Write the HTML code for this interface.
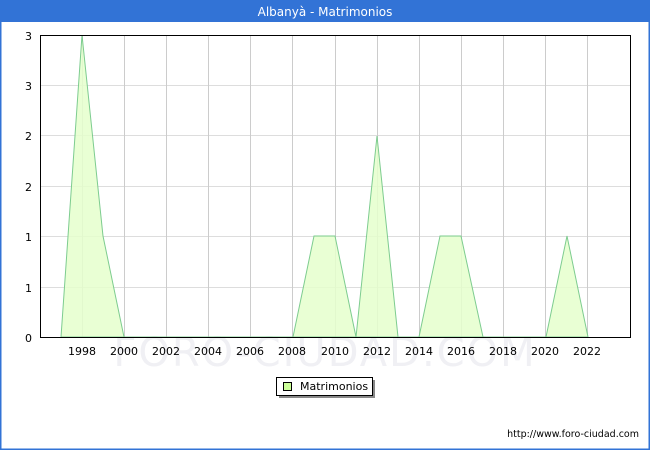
<!DOCTYPE html>
<html><head><meta charset="utf-8"><style>
body{margin:0;width:650px;height:450px;overflow:hidden;font-family:"DejaVu Sans","Liberation Sans",sans-serif;}
</style></head><body>
<svg width="650" height="450" xmlns="http://www.w3.org/2000/svg" font-family="DejaVu Sans, Liberation Sans, sans-serif">
<rect x="0" y="0" width="650" height="450" fill="#fff"/>
<rect x="0.5" y="0.5" width="649" height="449" fill="none" stroke="#3273d6" stroke-width="2"/>
<rect x="0" y="0" width="650" height="22" fill="#3273d6"/>
<text x="325" y="16" fill="#fff" font-size="12" text-anchor="middle">Albanyà - Matrimonios</text>
<text x="325" y="366" fill="#f0f0f4" font-size="40" text-anchor="middle" letter-spacing="2">FORO-CIUDAD.COM</text>
<g stroke="#dddddd" stroke-width="1">
<line x1="40" y1="85.5" x2="630" y2="85.5"/><line x1="40" y1="135.5" x2="630" y2="135.5"/>
<line x1="40" y1="186.5" x2="630" y2="186.5"/><line x1="40" y1="236.5" x2="630" y2="236.5"/>
<line x1="40" y1="287.5" x2="630" y2="287.5"/>
</g>
<g stroke="#cccccc" stroke-width="1">
<line x1="82.5" y1="35" x2="82.5" y2="337"/><line x1="124.5" y1="35" x2="124.5" y2="337"/>
<line x1="166.5" y1="35" x2="166.5" y2="337"/><line x1="208.5" y1="35" x2="208.5" y2="337"/>
<line x1="250.5" y1="35" x2="250.5" y2="337"/><line x1="292.5" y1="35" x2="292.5" y2="337"/>
<line x1="335.5" y1="35" x2="335.5" y2="337"/><line x1="377.5" y1="35" x2="377.5" y2="337"/>
<line x1="419.5" y1="35" x2="419.5" y2="337"/><line x1="461.5" y1="35" x2="461.5" y2="337"/>
<line x1="503.5" y1="35" x2="503.5" y2="337"/><line x1="545.5" y1="35" x2="545.5" y2="337"/>
<line x1="587.5" y1="35" x2="587.5" y2="337"/>
</g>
<polygon fill="#e5ffcc" fill-opacity="0.85" stroke="#7dcc8f" stroke-width="1" points="61,337 82,35 103,236 124,337 293,337 314,236 335,236 356,337 377,136 398,337 419,337 440,236 461,236 483,337 546,337 567,236 588,337"/>
<rect x="40.5" y="35.5" width="590" height="302" fill="none" stroke="#000" stroke-width="1"/>
<g font-size="11" fill="#000" text-anchor="end">
<text x="32" y="40">3</text><text x="32" y="90">3</text><text x="32" y="140">2</text>
<text x="32" y="191">2</text><text x="32" y="241">1</text><text x="32" y="292">1</text><text x="32" y="342">0</text>
</g>
<g font-size="11" fill="#000" text-anchor="middle">
<text x="82" y="355">1998</text><text x="124" y="355">2000</text><text x="166" y="355">2002</text>
<text x="208" y="355">2004</text><text x="250" y="355">2006</text><text x="292" y="355">2008</text>
<text x="335" y="355">2010</text><text x="377" y="355">2012</text><text x="419" y="355">2014</text>
<text x="461" y="355">2016</text><text x="503" y="355">2018</text><text x="545" y="355">2020</text>
<text x="587" y="355">2022</text>
</g>
<rect x="279" y="380" width="96" height="18" fill="#888"/>
<rect x="276.5" y="377.5" width="96" height="18" fill="#fff" stroke="#000"/>
<rect x="283.5" y="382.5" width="8" height="8" fill="#ccff99" stroke="#000"/>
<text x="300" y="390" font-size="11" fill="#000">Matrimonios</text>
<text x="639" y="437" font-size="9.5" fill="#000" text-anchor="end">http://www.foro-ciudad.com</text>
</svg>
</body></html>
